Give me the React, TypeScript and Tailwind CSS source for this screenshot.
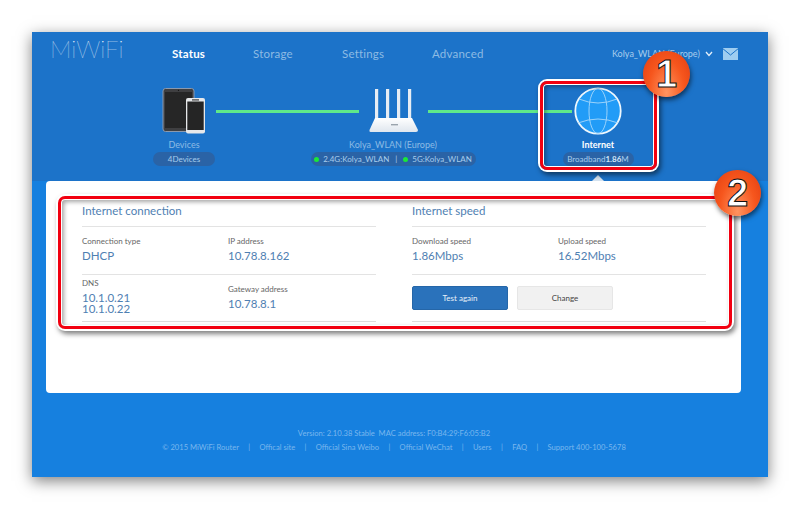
import React from "react";

const TabletPhone = () => (
  <svg width="46" height="48" viewBox="0 0 46 48">
    <rect x="1" y="1.5" width="31" height="43" rx="2.5" fill="#3f3f41" stroke="#8b99ad" strokeWidth="1" />
    <rect x="3" y="5" width="27" height="36" fill="#262626" />
    <circle cx="16.5" cy="3.3" r="0.6" fill="#111" />
    <rect x="24" y="11" width="19" height="35.5" rx="2" fill="#e6e8ea" />
    <rect x="25.3" y="14.5" width="16.4" height="28.5" fill="#252525" />
    <rect x="30" y="12.2" width="7" height="1.4" fill="#555" />
  </svg>
);

const Router = () => (
  <svg width="50" height="48" viewBox="0 0 50 48">
    <defs>
      <linearGradient id="rt" x1="0" y1="0" x2="0" y2="1">
        <stop offset="0" stopColor="#ffffff" />
        <stop offset="1" stopColor="#dfe6ee" />
      </linearGradient>
    </defs>
    <rect x="6" y="2" width="3.2" height="32" fill="#e7edf4" />
    <rect x="17" y="2" width="3.2" height="32" fill="#e7edf4" />
    <rect x="28" y="2" width="3.2" height="32" fill="#e7edf4" />
    <rect x="39" y="2" width="3.2" height="32" fill="#e7edf4" />
    <path d="M6 31 H43 L49 43 Q49 45 47 45 H1.5 Q0 45 0.5 43 Z" fill="url(#rt)" />
    <rect x="22" y="37" width="7" height="1.4" fill="#9aa4ad" />
  </svg>
);

const Globe = () => (
  <svg width="48" height="48" viewBox="0 0 48 48" fill="none">
    <circle cx="24" cy="24" r="22.7" fill="#229cf7" stroke="#eef7fd" strokeWidth="1.8" />
    <g stroke="#a8d8fa" strokeWidth="0.9">
      <ellipse cx="24" cy="24" rx="9" ry="22.7" />
      <path d="M5 12 Q24 20 43 12 M4 36 Q24 28 44 36" />
    </g>
  </svg>
);

const Mail = () => (
  <svg width="15" height="12" viewBox="0 0 15 12">
    <rect x="0" y="0" width="15" height="12" fill="#9fcdf0" />
    <path d="M0 0.8 L7.5 7 L15 0.8" fill="none" stroke="#1c73c9" strokeWidth="1" />
  </svg>
);

const Dot = () => <span className="w-[5px] h-[5px] rounded-full bg-[#19e838] inline-block" />;

const Field = ({ label, values, className = "" }: { label: string; values: string[]; className?: string }) => (
  <div className={`w-[146px] ${className}`}>
    <div className="text-[8px] leading-[12px] text-[#666]">{label}</div>
    <div className="text-[11.5px] leading-[11px] mt-[3px] text-[#4f80b2]">
      {values.map((v) => (
        <div key={v}>{v}</div>
      ))}
    </div>
  </div>
);

const Badge = ({ n, className }: { n: string; className: string }) => (
  <div
    className={`absolute w-[47px] h-[46px] rounded-full flex items-center justify-center bg-[radial-gradient(ellipse_at_50%_90%,#ff9460_0%,#f6561d_55%,#e23c10_100%)] shadow-[1px_3px_5px_rgba(0,0,0,0.55)] text-white font-bold text-[38px] leading-none [-webkit-text-stroke:1px_#111] [font-family:'Liberation_Sans',sans-serif] ${className}`}
  >
    {n}
  </div>
);

const Frame = ({ className }: { className: string }) => (
  <div
    className={`absolute border-[3px] border-[#f20010] rounded-[7px] shadow-[0_0_0_2px_#ffffff,2px_3px_5px_2px_rgba(0,0,0,0.5),inset_0_0_0_1px_#ffffff,inset_2px_2px_4px_1px_rgba(0,0,0,0.35)] ${className}`}
  />
);

export default function App() {
  return (
    <div className="w-[800px] h-[509px] bg-white pt-[32px] pl-[32px] overflow-hidden [font-family:'Lato','Open_Sans',sans-serif]">
      <div className="relative w-[736px] h-[445px] bg-[#1680df] shadow-[0_4px_14px_rgba(0,0,0,0.5)] flex flex-col">
        <div className="h-[149px] bg-[#1c73c9] shrink-0">
          <div className="h-[40px] flex items-start">
            <div className="ml-[18px] mt-[2px] text-[24px] leading-[30px] font-thin text-white w-[122px] [font-family:'Lato',sans-serif]">
              MiWiFi
            </div>
            <nav className="flex mt-[15px] text-[11.5px] leading-[14px] text-[#8dbbe4] tracking-[0.2px]">
              <span className="font-bold text-white w-[81px]">Status</span>
              <span className="w-[89px]">Storage</span>
              <span className="w-[90px]">Settings</span>
              <span className="w-[180px]">Advanced</span>
            </nav>
            <div className="mt-[16px] flex items-center text-[9px] leading-[12px] text-[#a8cdec]">
              <span className="w-[93px]">Kolya_WLAN (Europe)</span>
              <svg width="8" height="6" viewBox="0 0 8 6" fill="none" className="mr-[10px]">
                <path d="M1 1 L4 4.5 L7 1" stroke="#e4f0fa" strokeWidth="1.3" />
              </svg>
              <Mail />
            </div>
          </div>
          <div className="flex items-center mt-[15px] ml-[130px] h-[48px]">
            <TabletPhone />
            <div className="ml-[8px] w-[143px] h-[3px] bg-[#5fe889]" />
            <div className="ml-[10px]">
              <Router />
            </div>
            <div className="ml-[9px] w-[144px] h-[3px] bg-[#5fe889]" />
            <div className="ml-[2px]">
              <Globe />
            </div>
          </div>
          <div className="flex mt-[4px] ml-[48px] text-center">
            <div className="w-[208px] flex flex-col items-center">
              <div className="text-[9px] leading-[12px] text-[#8dbbe4]">Devices</div>
              <div className="mt-[1px] w-[62px] h-[14px] rounded-full bg-[#2a63a6] text-[8px] leading-[14px] text-[#a8cdec]">4Devices</div>
            </div>
            <div className="w-[210px] flex flex-col items-center">
              <div className="text-[9px] leading-[12px] text-[#8dbbe4]">Kolya_WLAN (Europe)</div>
              <div className="mt-[1px] w-[165px] h-[14px] rounded-full bg-[#2a63a6] text-[8px] leading-[14px] text-[#a8cdec] flex items-center justify-center gap-[4px]">
                <Dot />
                <span>2.4G:Kolya_WLAN</span>
                <span className="mx-[2px]">|</span>
                <Dot />
                <span>5G:Kolya_WLAN</span>
              </div>
            </div>
            <div className="w-[200px] flex flex-col items-center">
              <div className="text-[9px] leading-[12px] font-bold text-white">Internet</div>
              <div className="mt-[1px] w-[71px] h-[14px] rounded-full bg-[#2a63a6] text-[8px] leading-[14px] text-[#a8cdec]">
                Broadband<span className="font-bold text-[#d5e8f8]">1.86</span>M
              </div>
            </div>
          </div>
        </div>

        <div className="mx-[14px] w-[695px] h-[212px] bg-white rounded-[4px] shrink-0 pt-[22px] pl-[36px] flex gap-[36px]">
          <div className="w-[294px]">
            <div className="text-[11.5px] leading-[16px] text-[#4f80b2] h-[24px] border-b border-[#e3e3e3]">Internet connection</div>
            <div className="h-[48px] pt-[8px] flex border-b border-[#e3e3e3]">
              <Field label="Connection type" values={["DHCP"]} />
              <Field label="IP address" values={["10.78.8.162"]} />
            </div>
            <div className="h-[47px] flex border-b border-[#dcdcdc]">
              <Field label="DNS" values={["10.1.0.21", "10.1.0.22"]} className="pt-[2px]" />
              <Field label="Gateway address" values={["10.78.8.1"]} className="pt-[8px]" />
            </div>
          </div>
          <div className="w-[294px]">
            <div className="text-[11.5px] leading-[16px] text-[#4f80b2] h-[24px] border-b border-[#e3e3e3]">Internet speed</div>
            <div className="h-[48px] pt-[8px] flex border-b border-[#e3e3e3]">
              <Field label="Download speed" values={["1.86Mbps"]} />
              <Field label="Upload speed" values={["16.52Mbps"]} />
            </div>
            <div className="h-[47px] pt-[11px] flex gap-[9px] border-b border-[#dcdcdc]">
              <button className="w-[96px] h-[24px] rounded-[2px] bg-[#2a72bb] border border-[#2566a8] text-[8px] text-[#e8f1f9]">Test again</button>
              <button className="w-[96px] h-[24px] rounded-[2px] bg-[#f1f1f1] border border-[#e6e6e6] text-[8px] text-[#444]">Change</button>
            </div>
          </div>
        </div>

        <div className="mt-[33px] w-[724px] text-center text-[7.6px] leading-[14px] text-[#7ab7ee]">
          <div>Version: 2.10.38 Stable&nbsp;&nbsp;MAC address: F0:B4:29:F6:05:B2</div>
          <div className="flex justify-center gap-[9.3px]">
            <span>© 2015 MiWiFi Router</span>
            <span>|</span>
            <span>Offical site</span>
            <span>|</span>
            <span>Official Sina Weibo</span>
            <span>|</span>
            <span>Official WeChat</span>
            <span>|</span>
            <span>Users</span>
            <span>|</span>
            <span>FAQ</span>
            <span>|</span>
            <span>Support 400-100-5678</span>
          </div>
        </div>

        <div className="absolute left-[560px] top-[143px] w-0 h-0 border-x-[6px] border-x-transparent border-b-[6px] border-b-[#d5e3f0]" />
        <Frame className="left-[508px] top-[49px] w-[117px] h-[89px]" />
        <Frame className="left-[26px] top-[164px] w-[674px] h-[133px]" />
        <Badge n="1" className="left-[611px] top-[19px]" />
        <Badge n="2" className="left-[682px] top-[138px]" />
      </div>
    </div>
  );
}
